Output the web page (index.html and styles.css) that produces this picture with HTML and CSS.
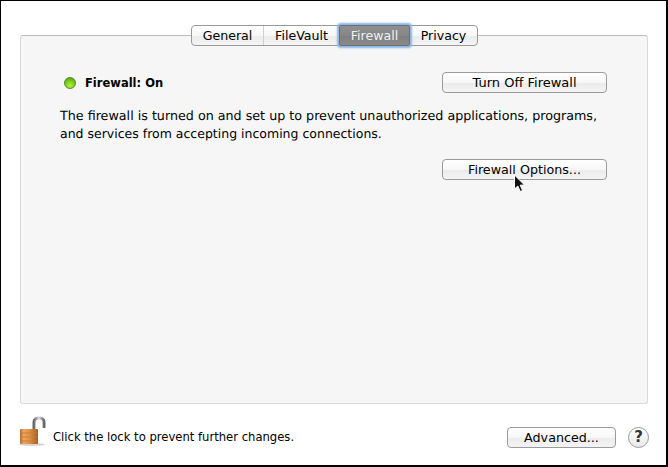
FILE: index.html
```html
<!DOCTYPE html>
<html lang="en">
<head>
    <meta charset="UTF-8">
    <title>Security &amp; Privacy</title>
    <link rel="stylesheet" href="styles.css">
</head>
<body>
    <div class="window">
        <div class="tabs">
            <span class="tab tab-first">General</span>
            <span class="tab">FileVault</span>
            <span class="tab tab-active">Firewall</span>
            <span class="tab tab-last">Privacy</span>
        </div>

        <div class="panel">
            <div class="status-row">
                <div class="status">
                    <span class="led"></span>
                    <span class="status-text">Firewall: On</span>
                </div>
                <button class="btn btn-wide btn-turnoff">Turn Off Firewall</button>
            </div>
            <p class="description">
                <span class="line-one">The firewall is turned on and set up to prevent unauthorized applications, programs,</span>
                <span class="line-two">and services from accepting incoming connections.</span>
            </p>
            <div class="options-row">
                <button class="btn btn-wide">Firewall Options...</button>
                <svg class="cursor" width="14" height="20" viewBox="0 0 14 20">
                    <path d="M1.5 1 L1.5 15 L4.8 12 L7.2 17.5 L9.6 16.4 L7.2 11.2 L11.5 11 Z" fill="#111" stroke="#fff" stroke-width="1"/>
                </svg>
            </div>
        </div>

        <div class="footer">
            <svg class="lock" width="30" height="32" viewBox="0 0 30 32">
                <defs>
                    <linearGradient id="body" x1="0" y1="0" x2="1" y2="0">
                        <stop offset="0" stop-color="#b5682a"/>
                        <stop offset="0.2" stop-color="#eda765"/>
                        <stop offset="0.55" stop-color="#dc9143"/>
                        <stop offset="1" stop-color="#a9591c"/>
                    </linearGradient>
                    <linearGradient id="shackle" x1="0" y1="0" x2="1" y2="0">
                        <stop offset="0" stop-color="#666"/>
                        <stop offset="0.5" stop-color="#ddd"/>
                        <stop offset="1" stop-color="#666"/>
                    </linearGradient>
                </defs>
                <ellipse cx="14" cy="28.5" rx="13" ry="1.5" fill="#d4d4d4"/>
                <path d="M16 14 V6 C16 0.5 26 0.5 26 6 V12" fill="none" stroke="url(#shackle)" stroke-width="3"/>
                <rect x="2" y="13" width="18" height="15" rx="1" fill="url(#body)"/>
                <path d="M3 17 H19 M3 21 H19 M3 25 H19" stroke="#c97f38" stroke-width="1"/>
            </svg>
            <span class="lock-text">Click the lock to prevent further changes.</span>
            <button class="btn btn-advanced">Advanced...</button>
            <span class="help">?</span>
        </div>
    </div>
</body>
</html>
```

FILE: styles.css
```css
html, body {
    margin: 0;
    padding: 0;
}
body {
    width: 668px;
    height: 467px;
    overflow: hidden;
    background-color: #fff;
    font-family: "DejaVu Sans", sans-serif;
    font-size: 12.6px;
    color: #000;
}
.window {
    box-sizing: border-box;
    width: 668px;
    height: 467px;
    border-style: solid;
    border-color: #000;
    border-width: 1px 2px 2px 1px;
    background-color: #fff;
    padding: 24px 17px 0 19px;
    display: flex;
    flex-direction: column;
}
.tabs {
    position: relative;
    z-index: 1;
    align-self: flex-start;
    margin-left: 171px;
    margin-bottom: -11px;
    display: flex;
    height: 21px;
    box-sizing: border-box;
    border: 1px solid #999;
    border-radius: 4px;
    background: linear-gradient(#fff, #f7f7f7 50%, #ebebeb 51%, #f4f4f4);
}
.tab {
    display: flex;
    align-items: center;
    justify-content: center;
    height: 19px;
    box-sizing: border-box;
    border-right: 1px solid #d0d0d0;
}
.tab-first { width: 72px; }
.tab:nth-child(2) { width: 75px; border-right: none; }
.tab-active {
    width: 71px;
    margin-top: -1px;
    height: 21px;
    background: linear-gradient(#8f8f8f, #868686 50%, #7e7e7e 51%, #8a8a8a);
    color: #f0f0f0;
    border: 1px solid #6f6f6f;
    border-radius: 2px;
    box-shadow: 0 0 2px 2px #86b6e6;
}
.tab-last { width: 67px; border-right: none; }
.panel {
    box-sizing: border-box;
    width: 628px;
    height: 369px;
    background-color: #f6f6f6;
    border: 1px solid #d9d9d9;
    border-top-color: #bcbcbc;
    border-radius: 3px;
    padding: 36px 40px 0 39px;
}
.status-row {
    display: flex;
    justify-content: space-between;
    align-items: center;
    padding-left: 4px;
}
.status {
    display: flex;
    align-items: center;
    gap: 9px;
}
.led {
    width: 10px;
    height: 10px;
    border-radius: 50%;
    border: 1px solid #5c8a2a;
    background: radial-gradient(circle at 50% 75%, #b4f23e, #6cc414 60%, #4f8f18);
}
.status-text {
    font-weight: bold;
    font-size: 11.5px;
}
.btn {
    box-sizing: border-box;
    height: 21px;
    padding: 0;
    border: 1px solid #9a9a9a;
    border-radius: 4px;
    background: linear-gradient(#fff, #f7f7f7 50%, #ebebeb 51%, #f4f4f4);
    font-family: inherit;
    font-size: 12.7px;
    color: #000;
}
.btn-wide {
    width: 165px;
}
.btn-turnoff {
    font-size: 13px;
}
.description {
    margin: 14px 0 0 0;
    text-rendering: geometricPrecision;
    line-height: 18px;
    white-space: nowrap;
}
.line-one {
    display: block;
    font-size: 12.71px;
}
.line-two {
    display: block;
    font-size: 12.5px;
}
.options-row {
    position: relative;
    display: flex;
    justify-content: flex-end;
    margin-top: 16px;
}
.cursor {
    position: absolute;
    left: 453px;
    top: 15px;
}
.footer {
    display: flex;
    align-items: center;
    height: 32px;
    margin-top: 17px;
    margin-left: -2px;
}
.lock {
    margin-right: 5px;
    margin-top: -10px;
}
.lock-text {
    flex: 1;
    font-size: 11.6px;
}
.btn-advanced {
    width: 109px;
}
.help {
    box-sizing: border-box;
    width: 21px;
    height: 21px;
    margin-left: 12px;
    border: 1px solid #9a9a9a;
    border-radius: 50%;
    background: linear-gradient(#fff, #e9e9e9);
    display: flex;
    align-items: center;
    justify-content: center;
    font-weight: bold;
    font-size: 15px;
    color: #333;
}
```
